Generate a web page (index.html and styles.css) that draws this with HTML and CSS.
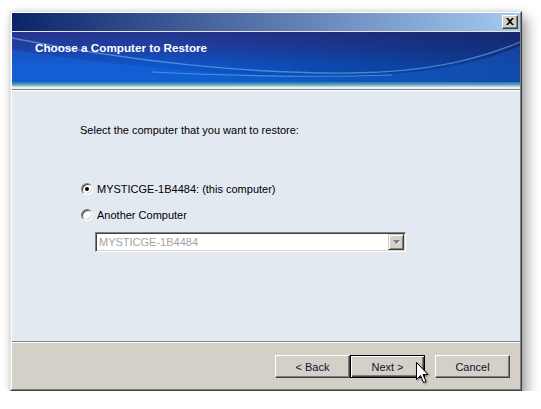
FILE: index.html
```html
<!DOCTYPE html>
<html>
<head>
<meta charset="utf-8">
<link rel="stylesheet" href="styles.css">
</head>
<body>
<div class="window">
  <div class="frame">
    <div class="titlebar">
      <span class="close">
        <svg width="8" height="7" viewBox="0 0 8 7"><path d="M0 0h2l2 2 2-2h2L5 3.5 8 7H6L4 5 2 7H0l3-3.5z" fill="#000"/></svg>
      </span>
    </div>
    <div class="header">
      <svg class="swoosh" width="508" height="50" viewBox="0 0 508 50">
        <path d="M0 18 C120 36 240 46 340 44 C420 42 470 30 508 14 L508 50 L0 50 Z" fill="rgba(30,110,225,0.35)"/>
        <path d="M0 6 C120 30 240 42 340 41 C420 40 470 26 508 10" fill="none" stroke="rgba(140,195,255,0.5)" stroke-width="1.3"/>
        <path d="M140 40 C240 45 320 45 380 43" fill="none" stroke="rgba(110,190,255,0.55)" stroke-width="1.2"/>
      </svg>
      <h1 class="heading">Choose a Computer to Restore</h1>
    </div>
    <div class="band"></div>
    <div class="sep-top"></div>
    <div class="content">
      <p class="prompt">Select the computer that you want to restore:</p>
      <div class="options">
        <div class="radio-row first"><span class="radio checked"></span><span>MYSTICGE-1B4484: (this computer)</span></div>
        <div class="radio-row second"><span class="radio"></span><span>Another Computer</span></div>
        <div class="combo">
          <span class="combo-value">MYSTICGE-1B4484</span>
          <span class="combo-drop">
            <svg width="7" height="5" viewBox="0 0 7 5"><path d="M0 0h7L3.5 4z" fill="#808080"/><path d="M4 4l3-3v1L4.5 5z" fill="#fff"/></svg>
          </span>
        </div>
      </div>
    </div>
    <div class="footer">
      <button class="btn">&lt; Back</button>
      <button class="btn default">Next &gt;</button>
      <button class="btn cancel">Cancel</button>
    </div>
    <svg class="cursor" width="14" height="23" viewBox="0 0 14 23">
      <path d="M1.5 1.5 L1.5 18.5 L5.5 14.5 L8.5 21.5 L11 20.5 L8 13.5 L13 13.5 Z" fill="#fff" stroke="#000" stroke-width="1" stroke-linejoin="miter"/>
    </svg>
  </div>
</div>
</body>
</html>
```

FILE: styles.css
```css
html, body {
  margin: 0;
  padding: 0;
  background: #ffffff;
}

body {
  font-family: "Liberation Sans", Arial, sans-serif;
  font-size: 11px;
  color: #000;
}

.window {
  margin: 11px 0 0 10px;
  width: 512px;
  height: 380px;
  box-sizing: border-box;
  border: 1px solid;
  border-color: #e4e2db #404040 #404040 #e4e2db;
  box-shadow: 5px 7px 12px rgba(0, 0, 0, 0.38), 0 0 5px rgba(0, 0, 0, 0.12);
}

.frame {
  position: relative;
  height: 100%;
  box-sizing: border-box;
  border: 1px solid;
  border-color: #ffffff #808080 #808080 #ffffff;
  background: #d4d0c8;
  display: flex;
  flex-direction: column;
}

.titlebar {
  flex-shrink: 0;
  border-bottom: 1px solid #e6e6e6;
  background: linear-gradient(90deg, #0a246a 0%, #a6caf0 100%);
  display: flex;
  justify-content: flex-end;
  align-items: flex-start;
  padding: 2px 2px 0 0;
  box-sizing: content-box;
  height: 16px;
}

.close {
  width: 16px;
  height: 14px;
  box-sizing: border-box;
  background: #d4d0c8;
  border: 1px solid;
  border-color: #ffffff #404040 #404040 #ffffff;
  box-shadow: inset -1px -1px 0 #808080;
  display: flex;
  align-items: center;
  justify-content: center;
  padding: 0 1px 1px 0;
}

.close svg {
  display: block;
}

.header {
  position: relative;
  flex-shrink: 0;
  height: 50px;
  overflow: hidden;
  background:
    linear-gradient(90deg, rgba(0, 0, 0, 0) 30%, rgba(6, 28, 80, 0.5) 100%),
    linear-gradient(180deg, #28338c 0%, #1d42a6 35%, #0d57cb 68%, #0b58c8 100%);
}

.swoosh {
  position: absolute;
  left: 0;
  top: 0;
}

.heading {
  position: relative;
  margin: 0;
  padding: 9px 0 0 23px;
  font-size: 11.7px;
  line-height: 13px;
  font-weight: bold;
  color: #ffffff;
}

.band {
  flex-shrink: 0;
  height: 5px;
  background: linear-gradient(180deg, #2e74b8 0%, #4c92b8 40%, #8cc2d2 75%, #cfe6ea 100%);
}

.sep-top {
  flex-shrink: 0;
  height: 2px;
  background: #edf1f5;
  border-bottom: 1px solid #808080;
}

.content {
  flex: 1;
  background: #e3e9f1;
  border-top: 1px solid #ffffff;
  border-bottom: 1px solid #808080;
  padding: 33px 0 0 68px;
}

.prompt {
  margin: 0;
  line-height: 13px;
}

.options {
  margin-top: 46px;
  display: flex;
  flex-direction: column;
  align-items: flex-start;
}

.radio-row {
  display: flex;
  align-items: center;
  height: 13px;
  line-height: 13px;
  padding-left: 1px;
}

.radio-row.second {
  margin-top: 13px;
}

.radio {
  position: relative;
  width: 12px;
  height: 12px;
  box-sizing: border-box;
  border-radius: 50%;
  border: 1px solid;
  border-color: #808080 #ffffff #ffffff #808080;
  background: #ffffff;
  box-shadow: inset 1px 1px 0 #404040, inset -1px -1px 0 #d4d0c8;
  margin-right: 4px;
  margin-top: -1px;
}

.radio.checked::after {
  content: "";
  position: absolute;
  left: 3px;
  top: 3px;
  width: 4px;
  height: 4px;
  border-radius: 50%;
  background: #000;
}

.combo {
  margin: 10px 0 0 15px;
  width: 311px;
  height: 20px;
  box-sizing: border-box;
  border: 1px solid;
  border-color: #808080 #ffffff #ffffff #808080;
  box-shadow: inset 1px 1px 0 #404040, inset -1px -1px 0 #d4d0c8;
  background: #ffffff;
  display: flex;
  align-items: stretch;
  padding: 1px;
}

.combo-value {
  flex: 1;
  padding-left: 2px;
  line-height: 16px;
  color: #a3a3a3;
}

.combo-drop {
  width: 16px;
  box-sizing: border-box;
  background: #d4d0c8;
  border: 1px solid;
  border-color: #d4d0c8 #404040 #404040 #d4d0c8;
  box-shadow: inset 1px 1px 0 #ffffff, inset -1px -1px 0 #808080;
  display: flex;
  align-items: center;
  justify-content: center;
}

.combo-drop svg {
  display: block;
}

.footer {
  flex-shrink: 0;
  border-top: 1px solid #ffffff;
  box-sizing: border-box;
  height: 47px;
  padding: 12px 10px 0 0;
  display: flex;
  justify-content: flex-end;
  align-items: flex-start;
}

.btn {
  width: 75px;
  height: 23px;
  box-sizing: border-box;
  margin: 0;
  padding: 0;
  font-family: "Liberation Sans", Arial, sans-serif;
  font-size: 11px;
  color: #101030;
  background: #d4d0c8;
  border: 1px solid;
  border-color: #ffffff #404040 #404040 #ffffff;
  box-shadow: inset -1px -1px 0 #808080;
}

.btn.default {
  border: 1px solid #000000;
  box-shadow: inset 1px 1px 0 #ffffff, inset -1px -1px 0 #404040, inset -2px -2px 0 #808080;
}

.btn.cancel {
  margin-left: 10px;
}

.cursor {
  position: absolute;
  left: 403px;
  top: 348px;
  filter: drop-shadow(1px 1px 1px rgba(0, 0, 0, 0.4));
}
```
